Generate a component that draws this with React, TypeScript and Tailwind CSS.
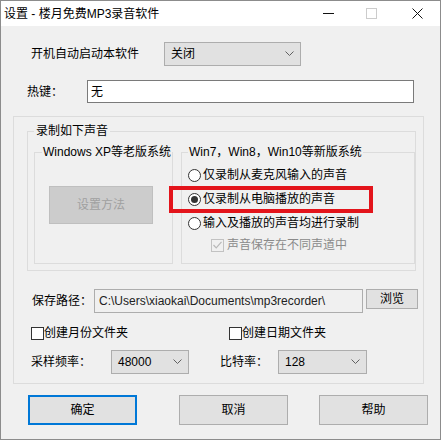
import React from "react";

// ─── Small Win32-style controls ─────────────────────────────────────

function Chevron() {
  return (
    <svg width="9" height="6" viewBox="0 0 9 6" aria-hidden>
      <polyline points="0.5,0.5 4.5,4.5 8.5,0.5" fill="none" stroke="#606060" strokeWidth="1" />
    </svg>
  );
}

function Combo({ value, className }: { value: string; className: string }) {
  return (
    <div
      className={`flex h-[24px] items-center justify-between border border-[#adadad] bg-[#e1e1e1] pl-[6px] pr-[6px] ${className}`}
    >
      <span>{value}</span>
      <Chevron />
    </div>
  );
}

function Radio({ checked = false }: { checked?: boolean }) {
  return (
    <span className="flex h-[13px] w-[13px] shrink-0 items-center justify-center rounded-full border border-[#333] bg-white">
      {checked ? <span className="h-[7px] w-[7px] rounded-full bg-[#333]" /> : null}
    </span>
  );
}

function CheckBox({ disabled = false, checked = false }: { disabled?: boolean; checked?: boolean }) {
  return (
    <span
      className={
        disabled
          ? "flex h-[13px] w-[13px] shrink-0 items-center justify-center border border-[#c2c2c2] bg-[#f0f0f0]"
          : "flex h-[13px] w-[13px] shrink-0 items-center justify-center border border-[#333] bg-white"
      }
    >
      {checked ? (
        <svg width="9" height="8" viewBox="0 0 9 8" aria-hidden>
          <polyline points="0.5,4 3.2,6.8 8.5,0.8" fill="none" stroke={disabled ? "#b8b8b8" : "#333"} strokeWidth="1.2" />
        </svg>
      ) : null}
    </span>
  );
}

function Button({ label, primary = false }: { label: string; primary?: boolean }) {
  return (
    <div
      className={
        primary
          ? "flex h-[30px] w-[109px] items-center justify-center border-2 border-[#0078d7] bg-[#e1e1e1]"
          : "flex h-[30px] w-[109px] items-center justify-center border border-[#adadad] bg-[#e1e1e1]"
      }
    >
      {label}
    </div>
  );
}

// ─── Dialog ─────────────────────────────────────────────────────────

export default function App() {
  return (
    <div className="h-[440px] w-[441px] overflow-hidden border border-[#8c8c8c] bg-[#f0f0f0] font-['Liberation_Sans','Noto_Sans_CJK_SC',sans-serif] text-[12px] leading-[16px] text-black">
      {/* title bar */}
      <div className="flex h-[25px] items-center bg-white">
        <span className="ml-[3px]">设置 - 楼月免费MP3录音软件</span>
        <div className="ml-auto flex h-full">
          <div className="flex w-[40px] items-center justify-center">
            <svg width="11" height="11" viewBox="0 0 11 11" aria-hidden>
              <line x1="0" y1="5.5" x2="11" y2="5.5" stroke="#111" strokeWidth="1" />
            </svg>
          </div>
          <div className="flex w-[46px] items-center justify-center">
            <svg width="11" height="11" viewBox="0 0 11 11" aria-hidden>
              <rect x="0.5" y="0.5" width="10" height="10" fill="none" stroke="#cccccc" strokeWidth="1" />
            </svg>
          </div>
          <div className="flex w-[46px] items-center justify-center">
            <svg width="11" height="11" viewBox="0 0 11 11" aria-hidden>
              <path d="M0.5 0.5 L10.5 10.5 M10.5 0.5 L0.5 10.5" stroke="#111" strokeWidth="1" />
            </svg>
          </div>
        </div>
      </div>

      {/* autostart */}
      <div className="mt-[16px] flex items-center pl-[30px]">
        <span className="w-[133px]">开机自动启动本软件</span>
        <Combo value="关闭" className="w-[137px]" />
      </div>

      {/* hotkey */}
      <div className="mt-[14px] flex items-center pl-[26px]">
        <span className="w-[60px]">热键：</span>
        <div className="flex h-[23px] w-[327px] items-center border border-[#7a7a7a] bg-white pl-[3px]">无</div>
      </div>

      {/* main frame */}
      <div className="relative mt-[13px] ml-[12px] h-[268px] w-[411px] border border-[#dcdcdc]">
        <fieldset className="mt-[6px] ml-[13px] h-[148px] w-[389px] border border-[#dcdcdc]">
          <legend className="ml-[6px] px-[2px]">录制如下声音</legend>
          <div className="mt-[5px] flex gap-[8px] pl-[6px]">
            <fieldset className="h-[120px] w-[135px] border border-[#dcdcdc]">
              <legend className="ml-[7px] whitespace-nowrap px-[1px]">Windows XP等老版系统</legend>
              <div className="mt-[26px] ml-[14px] flex h-[38px] w-[104px] items-center justify-center border border-[#bfbfbf] bg-[#cccccc] text-[#a0a0a0]">
                设置方法
              </div>
            </fieldset>
            <fieldset className="h-[120px] w-[234px] border border-[#dcdcdc]">
              <legend className="ml-[6px] whitespace-nowrap px-[1px]">Win7，Win8，Win10等新版系统</legend>
              <div className="mt-[3px] flex flex-col pl-[6px]">
                <div className="flex h-[24px] items-center gap-[2px]">
                  <Radio />
                  <span>仅录制从麦克风输入的声音</span>
                </div>
                <div className="flex h-[24px] items-center gap-[2px]">
                  <Radio checked />
                  <span>仅录制从电脑播放的声音</span>
                </div>
                <div className="flex h-[24px] items-center gap-[2px]">
                  <Radio />
                  <span>输入及播放的声音均进行录制</span>
                </div>
                <div className="flex h-[20px] items-center gap-[3px] pl-[23px]">
                  <CheckBox disabled checked />
                  <span className="text-[#8a8a8a]">声音保存在不同声道中</span>
                </div>
              </div>
            </fieldset>
          </div>
        </fieldset>

        {/* save path */}
        <div className="mt-[18px] flex items-start pl-[18px]">
          <span className="w-[62px] leading-[24px]">保存路径：</span>
          <div className="flex h-[24px] w-[269px] items-center border border-[#adadad] bg-[#f0f0f0] pl-[4px] text-[#222]">
            C:\Users\xiaokai\Documents\mp3recorder\
          </div>
          <div className="ml-[3px] flex h-[20px] w-[52px] items-center justify-center border border-[#adadad] bg-[#e1e1e1]">
            浏览
          </div>
        </div>

        {/* folder options */}
        <div className="mt-[12px] flex h-[16px] items-center pl-[17px]">
          <div className="flex w-[198px] items-center">
            <CheckBox />
            <span>创建月份文件夹</span>
          </div>
          <div className="flex items-center">
            <CheckBox />
            <span>创建日期文件夹</span>
          </div>
        </div>

        {/* rates */}
        <div className="mt-[9px] flex items-center pl-[17px]">
          <span className="w-[80px]">采样频率：</span>
          <Combo value="48000" className="w-[78px]" />
          <span className="ml-[31px] w-[58px]">比特率：</span>
          <Combo value="128" className="w-[89px]" />
        </div>

        {/* annotation */}
        <div className="absolute left-[155px] top-[69px] h-[27px] w-[204px] border-4 border-[#e3141b]" />
      </div>

      {/* dialog buttons */}
      <div className="mt-[11px] flex pl-[27px]">
        <Button label="确定" primary />
        <div className="ml-[42px]">
          <Button label="取消" />
        </div>
        <div className="ml-[31px]">
          <Button label="帮助" />
        </div>
      </div>
    </div>
  );
}
